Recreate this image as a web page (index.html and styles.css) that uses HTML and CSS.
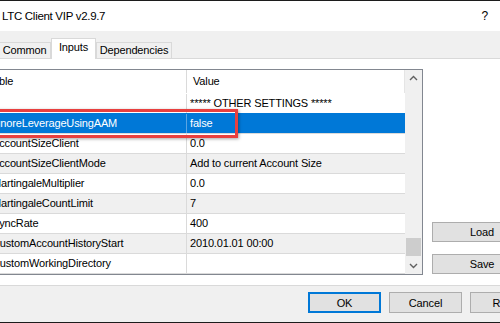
FILE: index.html
```html
<!DOCTYPE html>
<html>
  <head>
    <meta charset="UTF-8">
    <title>LTC Client VIP v2.9.7</title>
    <link rel="stylesheet" href="styles.css">
  </head>
  <body>
    <div class="topline"></div>
    <header class="titlebar">
      <span class="title">LTC Client VIP v2.9.7</span>
      <span class="help">?</span>
    </header>

    <nav class="tabs">
      <div class="tab tab-common">Common</div>
      <div class="tab tab-inputs active">Inputs</div>
      <div class="tab tab-deps">Dependencies</div>
    </nav>

    <section class="page">
      <div class="grid">
        <div class="rows">
          <div class="row head">
            <div class="cell name">Variable</div>
            <div class="cell val">Value</div>
          </div>
          <div class="row first">
            <div class="cell name"></div>
            <div class="cell val">***** OTHER SETTINGS *****</div>
          </div>
          <div class="row selected">
            <div class="cell name">ignoreLeverageUsingAAM</div>
            <div class="cell val">false</div>
          </div>
          <div class="row">
            <div class="cell name">AccountSizeClient</div>
            <div class="cell val">0.0</div>
          </div>
          <div class="row alt">
            <div class="cell name">AccountSizeClientMode</div>
            <div class="cell val">Add to current Account Size</div>
          </div>
          <div class="row">
            <div class="cell name">MartingaleMultiplier</div>
            <div class="cell val">0.0</div>
          </div>
          <div class="row alt">
            <div class="cell name">MartingaleCountLimit</div>
            <div class="cell val">7</div>
          </div>
          <div class="row">
            <div class="cell name">SyncRate</div>
            <div class="cell val">400</div>
          </div>
          <div class="row alt">
            <div class="cell name">CustomAccountHistoryStart</div>
            <div class="cell val">2010.01.01 00:00</div>
          </div>
          <div class="row">
            <div class="cell name">CustomWorkingDirectory</div>
            <div class="cell val"></div>
          </div>
          <div class="row alt">
            <div class="cell name"></div>
            <div class="cell val"></div>
          </div>
        </div>
        <div class="scrollbar">
          <svg class="arrow" width="17" height="17" viewBox="0 0 17 17">
            <polyline points="5,10 8.5,6.5 12,10" fill="none" stroke="#606060" stroke-width="1.4"/>
          </svg>
          <div class="track">
            <div class="thumb"></div>
          </div>
          <svg class="arrow" width="17" height="17" viewBox="0 0 17 17">
            <polyline points="5,7 8.5,10.5 12,7" fill="none" stroke="#606060" stroke-width="1.4"/>
          </svg>
        </div>
      </div>

      <div class="side">
        <button class="btn side-btn">Load</button>
        <button class="btn side-btn">Save</button>
      </div>
    </section>

    <footer class="footer">
      <button class="btn default">OK</button>
      <button class="btn">Cancel</button>
      <button class="btn">Reset</button>
    </footer>
    <div class="bottomline"></div>

    <!-- annotation box drawn over the selected row -->
    <div class="highlight"></div>
  </body>
</html>
```

FILE: styles.css
```css
*{
  box-sizing: border-box;
}
html, body{
  margin: 0;
  padding: 0;
  width: 500px;
  height: 323px;
  overflow: hidden;
}
body{
  position: relative;
  background: #f0f0f0;
  font-family: "Liberation Sans", Arial, sans-serif;
  font-size: 11px;
  letter-spacing: -0.15px;
  color: #000;
}

.topline{
  height: 1px;
  background: #1c1c1c;
}
.titlebar{
  height: 30px;
  background: #fff;
  display: flex;
  align-items: center;
  justify-content: space-between;
  padding: 0 12px 0 2px;
}
.titlebar .title{
  font-size: 11.5px;
  letter-spacing: -0.3px;
}
.titlebar .help{
  font-size: 12px;
}

/* tab strip */
.tabs{
  height: 28px;
  display: flex;
  align-items: flex-end;
  border-bottom: 1px solid #d9d9d9;
}
.tab{
  height: 16px;
  border: 1px solid #d9d9d9;
  border-bottom: none;
  background: #f0f0f0;
  text-align: center;
  line-height: 15px;
}
.tab-common{
  width: 53px;
  margin-left: -2px;
}
.tab-inputs{
  width: 45px;
}
.tab-deps{
  width: 76px;
}
.tab.active{
  height: 21px;
  margin-bottom: -1px;
  background: #fff;
  line-height: 16px;
  position: relative;
  z-index: 1;
}

/* tab page */
.page{
  height: 227px;
  background: #fff;
  border-bottom: 1px solid #d9d9d9;
  padding-top: 10px;
  display: flex;
  align-items: flex-start;
}
.grid{
  flex: none;
  width: 453px;
  height: 206px;
  margin-left: -30px;
  border: 1px solid #828790;
  display: flex;
  overflow: hidden;
}
.rows{
  flex: 1;
  overflow: hidden;
}
.row{
  display: flex;
  height: 20px;
  border-top: 1px solid #dadada;
  background: #fff;
}
.row.alt{
  background: #f0f0f0;
}
.row.head{
  height: 23px;
  border-top: none;
}
.row.first{
  border-top-color: #fff;
}
.row.selected{
  background: #0078d7;
  border-top-color: #0078d7;
  color: #fff;
}
.cell{
  line-height: 19px;
  white-space: nowrap;
  overflow: hidden;
}
.cell.name{
  width: 216px;
  flex: none;
  padding-left: 21px;
  border-right: 1px solid #dadada;
}
.cell.val{
  flex: 1;
  padding-left: 3px;
}
.row.head .cell{
  line-height: 23px;
}
.row.head .cell.name{
  padding-left: 4px;
}
.row.head .cell.val{
  padding-left: 6px;
  border-right: 1px solid #e5e5e5;
}
.row.selected .cell.name{
  border-right-color: #5aa5e3;
}

.scrollbar{
  width: 17px;
  flex: none;
  background: #f0f0f0;
  display: flex;
  flex-direction: column;
}
.scrollbar .arrow{
  display: block;
  flex: none;
}
.scrollbar .track{
  flex: 1;
  display: flex;
  flex-direction: column;
  justify-content: flex-end;
  padding: 0 1px 1px;
}
.scrollbar .thumb{
  height: 18px;
  background: #cdcdcd;
}

/* buttons */
.btn{
  font-family: inherit;
  font-size: 11px;
  letter-spacing: -0.15px;
  color: #000;
  background: #e1e1e1;
  border: 1px solid #adadad;
  border-radius: 0;
  padding: 0;
  margin: 0;
  width: 73px;
  height: 21px;
  flex: none;
}
.btn.default{
  border: 2px solid #0078d7;
}

.side{
  flex: none;
  align-self: stretch;
  display: flex;
  flex-direction: column;
  justify-content: flex-end;
  gap: 12px;
  padding: 0 0 11px 9px;
}
.side-btn{
  width: 100px;
  height: 20px;
}

.footer{
  height: 36px;
  display: flex;
  align-items: flex-start;
  gap: 8px;
  padding: 6px 0 0 308px;
}
.bottomline{
  height: 1px;
  background: #1c1c1c;
}

.highlight{
  position: absolute;
  left: -10px;
  top: 109px;
  width: 248px;
  height: 29px;
  border: 3px solid #e8403f;
  box-shadow: 1px 1px 3px rgba(0, 0, 0, 0.35);
  pointer-events: none;
}
```
